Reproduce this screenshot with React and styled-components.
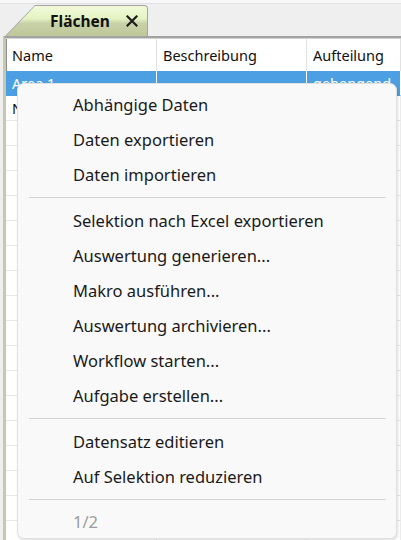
import styled, { createGlobalStyle } from "styled-components";

const GlobalStyle = createGlobalStyle`
  html, body {
    margin: 0;
    padding: 0;
    background: #f0f0f0;
  }
  body {
    font-family: "Noto Sans", "Open Sans", sans-serif;
    color: #1a1a1a;
  }
`;

const Window = styled.div`
  position: relative;
  width: 401px;
  height: 540px;
  overflow: hidden;
  display: flex;
  flex-direction: column;
  background: #efefef;
`;

const TabStrip = styled.div`
  height: 36px;
  padding-left: 5px;
  box-sizing: border-box;
  display: flex;
  align-items: flex-end;
  border-top: 3px solid #f8f8f8;
  box-shadow: inset 0 1px 0 #e2e2e2;
`;

const TabFrame = styled.div`
  width: 143px;
  height: 31px;
  box-sizing: border-box;
  padding: 1px 1px 0 1px;
  background: #a4a4a4;
  border-top-right-radius: 4px;
  clip-path: polygon(30px 0, 100% 0, 100% 100%, 0 100%);
`;

const TabFace = styled.div`
  height: 100%;
  display: flex;
  align-items: center;
  padding-left: 44px;
  box-sizing: border-box;
  background: linear-gradient(#f2fadb 0%, #e5f3c3 42%, #c9d1a8 58%, #bec799 100%);
  border-top-right-radius: 3px;
  clip-path: polygon(29px 0, 100% 0, 100% 100%, 0 100%);
`;

const TabTitle = styled.span`
  font-size: 15.5px;
  font-weight: 700;
  color: #111;
`;

const CloseIcon = styled.svg`
  margin-left: 16px;
  width: 12px;
  height: 12px;
`;

const Panel = styled.div`
  flex: 1;
  margin-left: 3px;
  background: #fff;
  border-top: 2px solid #a2a2a2;
  border-left: 3px solid #c5caae;
  box-shadow: inset 0 1px 0 #d4d4d4, inset 1px 0 0 #8e8e8e;
  padding-top: 1px;
  overflow: hidden;
`;

const Grid = styled.div`
  display: grid;
  grid-template-columns: 151px 150px 1fr;
`;

const HeaderCell = styled.div`
  height: 32px;
  display: flex;
  align-items: center;
  padding-left: 6px;
  font-size: 14.5px;
  color: #111;
  border-right: 1px solid #e2e2e2;
  white-space: nowrap;
  overflow: hidden;
`;

const Cell = styled.div`
  height: 25px;
  box-sizing: border-box;
  display: flex;
  align-items: center;
  padding-left: 6px;
  font-size: 14.5px;
  white-space: nowrap;
  overflow: hidden;
  border-bottom: 1px solid ${(p) => (p.$selected ? "#4c9fe2" : "#e7e7e7")};
  border-right: 1px solid ${(p) => (p.$selected ? "#ffffff" : "#ececec")};
  background: ${(p) => (p.$selected ? "#4c9fe2" : "#ffffff")};
  color: ${(p) => (p.$selected ? "#ffffff" : "#111")};
`;

const Menu = styled.div`
  position: absolute;
  left: 17px;
  top: 83px;
  width: 380px;
  box-sizing: border-box;
  padding-top: 3px;
  background: #f9f9f9;
  border: 1px solid #e1e1e1;
  border-radius: 7px;
  box-shadow: 1px 2px 3px rgba(0, 0, 0, 0.12);
`;

const MenuItem = styled.div`
  height: ${(p) => (p.$pager ? "33px" : "35px")};
  display: flex;
  align-items: center;
  padding-left: 55px;
  font-size: 16.5px;
  color: ${(p) => (p.$disabled ? "#9c9c9c" : "#1a1a1a")};
`;

const Separator = styled.hr`
  margin: 5px 10px 5px 11px;
  border: none;
  border-top: 1px solid #d5d5d5;
  height: 0;
`;

const columns = ["Name", "Beschreibung", "Aufteilung"];

const rows = [
  ["Area 1", "", "gebengend"],
  ["Nord", "", ""],
  ...Array.from({ length: 17 }, () => ["", "", ""]),
];

const menuGroups = [
  ["Abhängige Daten", "Daten exportieren", "Daten importieren"],
  [
    "Selektion nach Excel exportieren",
    "Auswertung generieren...",
    "Makro ausführen...",
    "Auswertung archivieren...",
    "Workflow starten...",
    "Aufgabe erstellen...",
  ],
  ["Datensatz editieren", "Auf Selektion reduzieren"],
];

export default function App() {
  return (
    <>
      <GlobalStyle />
      <Window>
        <TabStrip>
          <TabFrame>
            <TabFace>
              <TabTitle>Flächen</TabTitle>
              <CloseIcon viewBox="0 0 12 12">
                <path d="M1.5 1.5 L10.5 10.5 M10.5 1.5 L1.5 10.5" stroke="#1c1c1c" strokeWidth="2.2" strokeLinecap="square" />
              </CloseIcon>
            </TabFace>
          </TabFrame>
        </TabStrip>

        <Panel>
          <Grid>
            {columns.map((c) => (
              <HeaderCell key={c}>{c}</HeaderCell>
            ))}
            {rows.map((r, i) =>
              r.map((v, j) => (
                <Cell key={`${i}-${j}`} $selected={i === 0}>
                  {v}
                </Cell>
              ))
            )}
          </Grid>
        </Panel>

        <Menu>
          {menuGroups.map((group, gi) => (
            <div key={gi}>
              {group.map((label) => (
                <MenuItem key={label}>{label}</MenuItem>
              ))}
              <Separator />
            </div>
          ))}
          <MenuItem $disabled $pager>1/2</MenuItem>
        </Menu>
      </Window>
    </>
  );
}
